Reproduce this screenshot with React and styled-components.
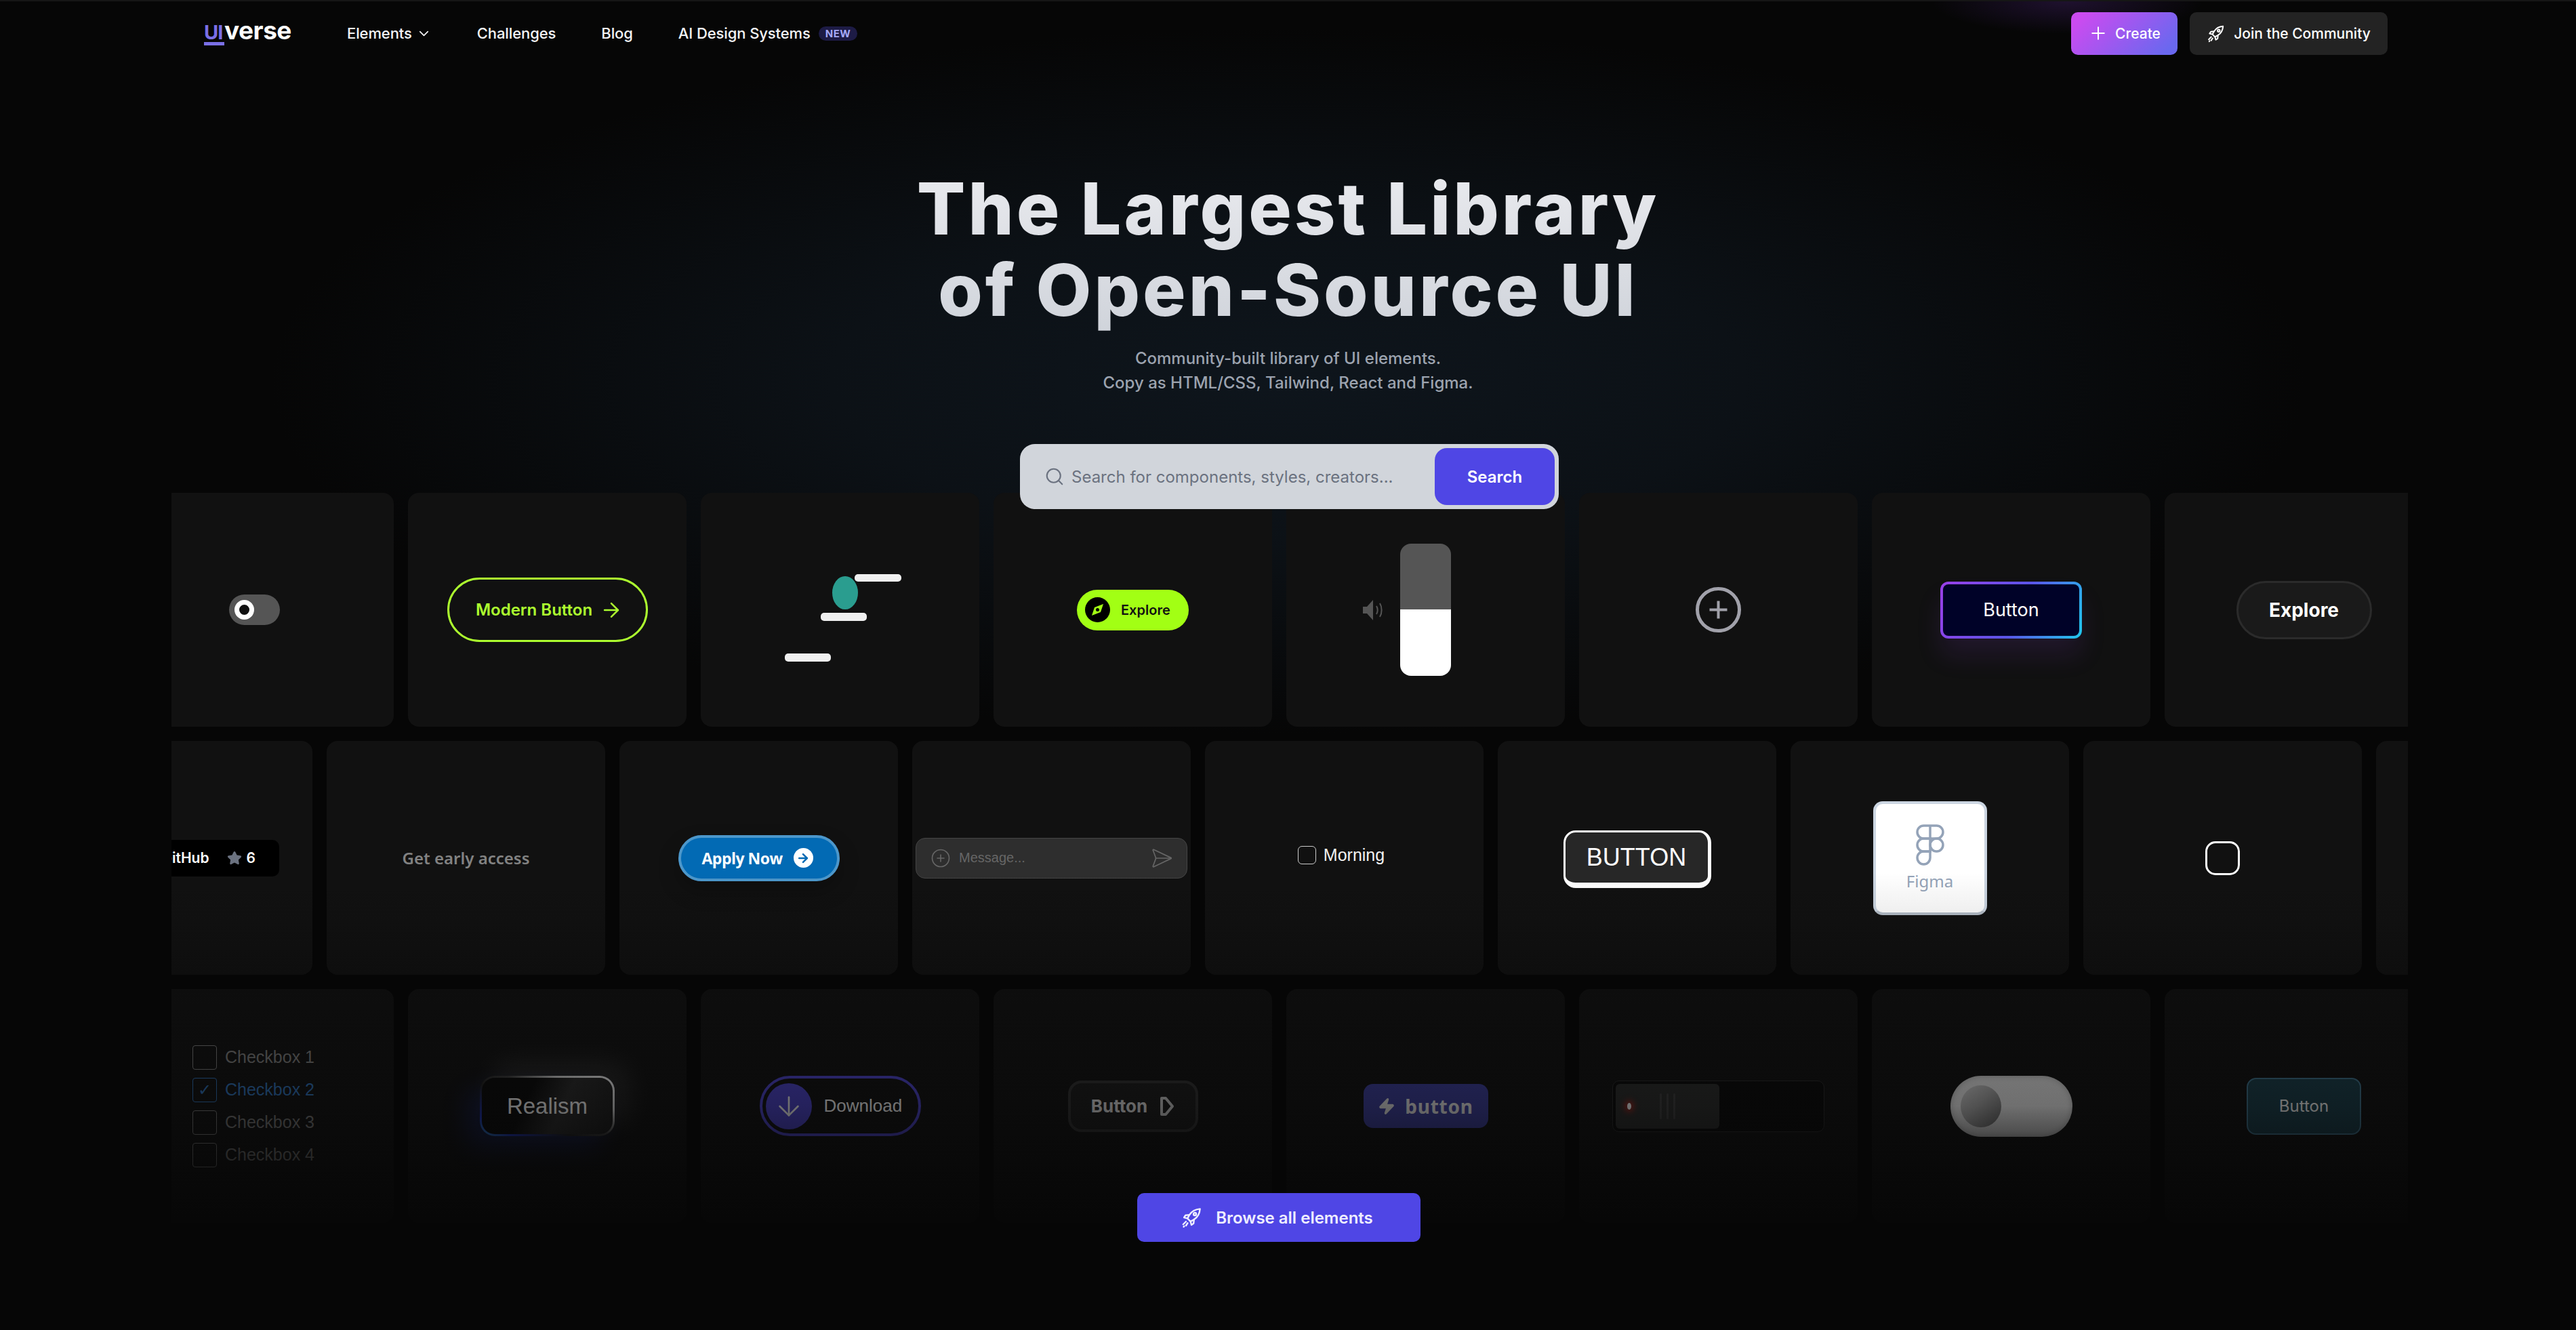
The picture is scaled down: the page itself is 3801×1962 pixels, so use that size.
import styled, { createGlobalStyle } from 'styled-components';
import { ChevronDown, Plus, Search as SearchIcon, ArrowRight, ArrowDown, Star, CirclePlus, SendHorizontal, Zap } from 'lucide-react';

const GlobalStyle = createGlobalStyle`
  html, body {
    margin: 0;
    background: #060606;
    overflow: hidden;
  }
  * {
    box-sizing: border-box;
  }
`;

const Page = styled.div`
  position: relative;
  width: 3801px;
  height: 1962px;
  overflow: hidden;
  font-family: Inter, 'Liberation Sans', sans-serif;
  color: #fff;
  border-top: 2px solid #161616;
  background:
    radial-gradient(200px 48px at 3050px 0, rgba(130, 60, 210, 0.2), transparent),
    radial-gradient(1500px 520px at 1900px 560px, #0e151c 0%, #0c1116 45%, rgba(6, 6, 6, 0) 100%),
    #060606;
`;

/* nav */
const Nav = styled.nav`
  display: flex;
  align-items: center;
  height: 94px;
  padding: 0 278px 0 301px;
`;

const Logo = styled.div`
  display: flex;
  align-items: baseline;
  width: 211px;
  font-size: 37px;
  font-weight: 700;
  letter-spacing: -0.5px;
  line-height: 1;
  padding-bottom: 6px;
`;

const LogoMark = styled.span`
  display: inline-block;
  width: 30px;
  font-size: 29px;
  font-weight: 700;
  color: #7a6fe6;
  border-bottom: 5px solid #7a6fe6;
  letter-spacing: -1px;
`;

const NavLinks = styled.div`
  display: flex;
  align-items: center;
  gap: 67px;
  flex: 1;
`;

const NavLink = styled.a`
  display: flex;
  align-items: center;
  gap: ${p => p.$gap || 12}px;
  font-size: 22px;
  font-weight: 500;
  letter-spacing: -0.1px;
  color: #f3f4f6;
  white-space: nowrap;
`;

const NewBadge = styled.span`
  padding: 0 10px;
  height: 21px;
  display: flex;
  align-items: center;
  border-radius: 11px;
  background: #1d1b45;
  color: #a5a8f5;
  font-size: 15px;
  font-weight: 700;
  letter-spacing: 0.4px;
`;

const NavActions = styled.div`
  display: flex;
  gap: 18px;
`;

const NavButton = styled.a`
  display: flex;
  align-items: center;
  justify-content: center;
  gap: ${p => (p.$primary ? 10 : 13)}px;
  width: ${p => (p.$primary ? 157 : 292)}px;
  height: 63px;
  border-radius: 10px;
  font-size: 21px;
  font-weight: 500;
  color: #fff;
  background: ${p => (p.$primary ? 'linear-gradient(135deg, #cb4bf0 10%, #6a68ef 90%)' : '#232323')};
`;

/* hero */
const Hero = styled.header`
  display: flex;
  flex-direction: column;
  align-items: center;
  padding-top: 152px;
`;

const Title = styled.h1`
  margin: 0;
  font-size: 106px;
  line-height: 120px;
  font-weight: 800;
  text-align: center;
  letter-spacing: 4px;
  color: transparent;
  background: linear-gradient(#e9eaee, #d0d4db);
  -webkit-background-clip: text;
  background-clip: text;
`;

const Subtitle = styled.p`
  margin: 23px 0 0;
  font-size: 24px;
  line-height: 36px;
  font-weight: 500;
  text-align: center;
  color: #9ca3af;
`;

const SearchBox = styled.div`
  position: relative;
  z-index: 3;
  display: flex;
  align-items: center;
  width: 795px;
  height: 96px;
  margin: 72px 0 0 4px;
  padding: 6px;
  border-radius: 22px;
  background: #d1d5db;
`;

const SearchField = styled.div`
  flex: 1;
  display: flex;
  align-items: center;
  gap: 10px;
  height: 100%;
  padding-left: 30px;
  color: #6b7280;
  font-size: 24px;
`;

const SearchButton = styled.button`
  width: 177px;
  height: 84px;
  border: 0;
  border-radius: 18px;
  background: #4f46e5;
  color: #fff;
  font-family: inherit;
  font-size: 24px;
  font-weight: 600;
`;

/* marquee rows */
const Rows = styled.section`
  position: relative;
  display: flex;
  flex-direction: column;
  gap: 21px;
  width: 3300px;
  margin: -24px 0 0 253px;
  overflow: hidden;
`;

const Row = styled.div`
  display: flex;
  gap: 21px;
  margin-left: ${p => p.$offset}px;
`;

const Card = styled.div`
  position: relative;
  flex: 0 0 411px;
  height: 345px;
  display: flex;
  align-items: center;
  justify-content: center;
  border-radius: 16px;
  background: #111;
`;

const Fade = styled.div`
  position: absolute;
  inset: 0;
  z-index: 2;
  pointer-events: none;
  background: linear-gradient(
    to bottom,
    rgba(6, 6, 6, 0) 52%,
    rgba(6, 6, 6, 0.07) 58%,
    rgba(6, 6, 6, 0.27) 66%,
    rgba(6, 6, 6, 0.33) 68%,
    rgba(6, 6, 6, 0.55) 84%,
    rgba(6, 6, 6, 0.92) 100%
  );
`;

/* row 1 */
const RingToggle = styled.div`
  display: flex;
  align-items: center;
  width: 75px;
  height: 45px;
  padding-left: 8px;
  border-radius: 23px;
  background: #555;
`;

const RingKnob = styled.span`
  width: 29px;
  height: 29px;
  border-radius: 50%;
  border: 7px solid #fff;
  background: #111;
`;

const ModernButton = styled.button`
  display: flex;
  align-items: center;
  gap: 11px;
  width: 296px;
  height: 95px;
  justify-content: center;
  padding: 0 0 0 6px;
  border: 3px solid #adff2f;
  border-radius: 48px;
  background: transparent;
  color: #adff2f;
  font-family: inherit;
  font-size: 24px;
  font-weight: 600;
`;

const ExplorePill = styled.button`
  display: flex;
  align-items: center;
  gap: 16px;
  width: 165px;
  height: 60px;
  padding: 0 0 0 12px;
  border: 0;
  border-radius: 30px;
  background: #a2ff14;
  color: #111;
  font-family: inherit;
  font-size: 20px;
  font-weight: 600;
`;

const SliderGroup = styled.div`
  display: flex;
  align-items: center;
  gap: 24px;
  margin-right: 56px;
`;

const VolumeSlider = styled.div`
  width: 75px;
  height: 195px;
  border-radius: 16px;
  background: linear-gradient(#555 50%, #fff 50%);
`;

const GlowButton = styled.button`
  width: 209px;
  height: 84px;
  border: 4px solid transparent;
  border-radius: 12px;
  background:
    linear-gradient(#000228, #000228) padding-box,
    linear-gradient(115deg, #9a3fe8 0%, #5a55e8 55%, #1fc8ec 100%) border-box;
  box-shadow: 0 26px 36px rgba(130, 60, 210, 0.13);
  color: #fff;
  font-family: inherit;
  font-size: 27px;
  font-weight: 400;
`;

const DarkPill = styled.button`
  width: 200px;
  height: 86px;
  border: 3px solid #2b2b2b;
  border-radius: 43px;
  background: #1a1a1a;
  color: #fff;
  font-family: inherit;
  font-size: 28px;
  font-weight: 700;
`;

/* row 2 */
const GithubPill = styled.div`
  display: flex;
  align-items: center;
  justify-content: flex-end;
  gap: 26px;
  width: 313px;
  height: 54px;
  padding-right: 35px;
  border-radius: 10px;
  background: #000;
  font-size: 21px;
  font-weight: 600;
`;

const StarCount = styled.span`
  display: flex;
  align-items: center;
  gap: 7px;
`;

const EarlyAccess = styled.span`
  font-family: 'Noto Sans', sans-serif;
  font-size: 24px;
  font-weight: 600;
  color: #828282;
`;

const ApplyButton = styled.button`
  display: flex;
  align-items: center;
  gap: 16px;
  width: 238px;
  height: 68px;
  padding-left: 31px;
  border: 4px solid #4c97cb;
  border-radius: 34px;
  background: #026ab4;
  box-shadow: 0 14px 30px rgba(0, 0, 0, 0.25);
  color: #fff;
  font-family: 'Open Sans', sans-serif;
  font-size: 23px;
  font-weight: 700;
  letter-spacing: -0.5px;
`;

const ApplyIcon = styled.span`
  display: flex;
  align-items: center;
  justify-content: center;
  width: 29px;
  height: 29px;
  border-radius: 50%;
  background: #fff;
  color: #026ab4;
`;

const MessageBox = styled.div`
  display: flex;
  align-items: center;
  gap: 12px;
  width: 401px;
  height: 60px;
  padding: 0 20px 0 21px;
  border: 1px solid #444;
  border-radius: 14px;
  background: #2e2e2e;
  color: #666;
  font-family: 'Liberation Sans', sans-serif;
  font-size: 20px;
`;

const MessageText = styled.span`
  flex: 1;
`;

const CheckRow = styled.label`
  display: flex;
  align-items: center;
  gap: 11px;
  margin: 0 9px 9px 0;
  font-size: 25px;
  color: #f1f1f1;
  font-family: 'Liberation Sans', sans-serif;
`;

const CheckBox = styled.span`
  display: flex;
  align-items: center;
  justify-content: center;
  width: ${p => p.$size}px;
  height: ${p => p.$size}px;
  border: 1.5px solid ${p => p.$color};
  border-radius: ${p => (p.$size > 30 ? 4 : 6)}px;
  color: ${p => p.$color};
  font-size: 24px;
`;

const ChunkyButton = styled.button`
  width: 218px;
  height: 85px;
  border: 3px solid #fff;
  border-right-width: 5px;
  border-bottom-width: 8px;
  border-radius: 18px;
  background: #272727;
  color: #fff;
  font-family: 'Liberation Sans', sans-serif;
  font-size: 36px;
  margin-top: 3px;
`;

const FigmaKey = styled.div`
  display: flex;
  flex-direction: column;
  align-items: center;
  gap: 6px;
  width: 168px;
  height: 168px;
  padding-top: 30px;
  border: 4px solid #cbd5e1;
  border-bottom-color: #b4bdc8;
  border-radius: 14px;
  background: #fff;
  color: #94a3b8;
  font-family: 'Noto Sans', sans-serif;
  font-size: 24px;
`;

const RoundSquare = styled.div`
  width: 51px;
  height: 50px;
  border: 3px solid #fff;
  border-radius: 15px;
`;

/* row 3 */
const CheckList = styled.div`
  display: flex;
  flex-direction: column;
  gap: 12px;
  width: 183px;
`;

const CheckItem = styled.label`
  display: flex;
  align-items: center;
  gap: 12px;
  font-family: 'Liberation Sans', sans-serif;
  font-size: 25px;
  color: ${p => p.$color};
`;

const RealismButton = styled.button`
  width: 199px;
  height: 89px;
  border: 3px solid transparent;
  border-radius: 22px;
  background:
    linear-gradient(115deg, #0a0a0a 35%, #2b2b2b 60%, #1a1a1a 100%) padding-box,
    linear-gradient(30deg, #2d7fb0 0%, #1b2ea8 14%, #1e1e1e 38%, #3a3a3a 55%, #ccc 75%, #eee 100%) border-box;
  box-shadow: 20px -18px 40px rgba(255, 255, 255, 0.1), -20px 20px 35px rgba(30, 60, 220, 0.22);
  color: #f0f0f0;
  font-family: 'Liberation Sans', sans-serif;
  font-size: 33px;
`;

const DownloadButton = styled.button`
  display: flex;
  align-items: center;
  gap: 18px;
  width: 238px;
  height: 89px;
  padding-left: 5px;
  border: 4px solid #4a42c4;
  border-radius: 45px;
  background: transparent;
  color: #f4f4f4;
  font-family: 'Liberation Sans', sans-serif;
  font-size: 26px;
`;

const DownloadIcon = styled.span`
  display: flex;
  align-items: center;
  justify-content: center;
  width: 68px;
  height: 68px;
  border-radius: 50%;
  background: #4a42c4;
`;

const OutlineButton = styled.button`
  display: flex;
  align-items: center;
  justify-content: center;
  gap: 18px;
  width: 192px;
  height: 76px;
  border: 4px solid #303030;
  border-radius: 20px;
  background: #1b1b1b;
  color: #d8d8d8;
  font-family: inherit;
  font-size: 26px;
  font-weight: 700;
`;

const BoltButton = styled.button`
  display: flex;
  align-items: center;
  justify-content: center;
  gap: 14px;
  width: 184px;
  height: 65px;
  border: 0;
  border-radius: 14px;
  background: #3b3d98;
  color: #e2e2e2;
  font-family: 'Noto Sans', sans-serif;
  font-size: 28px;
  font-weight: 700;
  letter-spacing: 0.8px;
`;

const SwitchTrack = styled.div`
  display: flex;
  align-items: center;
  width: 313px;
  height: 76px;
  padding: 0 4px;
  border-radius: 10px;
  border: 1px solid #2a2a2a;
  background: #0a0a0a;
`;

const SwitchHandle = styled.div`
  display: flex;
  align-items: center;
  gap: 42px;
  width: 153px;
  height: 66px;
  padding-left: 17px;
  border-radius: 6px;
  background: #2b2c2b;
`;

const RedDot = styled.span`
  width: 6px;
  height: 10px;
  border-radius: 50%;
  background: #eee;
  box-shadow: 0 0 8px 4px rgba(220, 30, 20, 0.6);
`;

const Grips = styled.span`
  display: flex;
  gap: 7px;
`;

const Grip = styled.span`
  width: 3px;
  height: 38px;
  border-radius: 2px;
  background: #3d3d3d;
`;

const SoftToggle = styled.div`
  display: flex;
  align-items: center;
  width: 180px;
  height: 90px;
  padding-left: 15px;
  border-radius: 45px;
  background: linear-gradient(#e0e0e0, #f0f0f0 50%, #c8c8c8);
  box-shadow: inset 0 0 10px rgba(0, 0, 0, 0.25);
`;

const SoftKnob = styled.span`
  width: 60px;
  height: 62px;
  border-radius: 50%;
  background: linear-gradient(135deg, #d0d0d0 5%, #aaa 45%, #777 85%);
`;

const TealButton = styled.button`
  width: 169px;
  height: 84px;
  border: 2px solid #3d6f88;
  border-radius: 14px;
  background: #1a3d49;
  color: #f0f0f0;
  font-family: inherit;
  font-size: 24px;
`;

/* footer cta */
const BrowseWrap = styled.div`
  position: relative;
  z-index: 3;
  display: flex;
  justify-content: center;
  margin-top: -44px;
  padding-right: 27px;
`;

const BrowseButton = styled.button`
  display: flex;
  align-items: center;
  justify-content: center;
  gap: 20px;
  width: 418px;
  height: 72px;
  padding: 0 6px 0 0;
  border: 0;
  border-radius: 10px;
  background: #4f46e5;
  color: #eef;
  font-family: inherit;
  font-size: 24px;
  font-weight: 600;
`;

const RocketIcon = ({ size }) => (
  <svg width={size} height={size} viewBox="0 0 24 24" fill="none" stroke="currentColor" strokeWidth="1.8" strokeLinecap="round" strokeLinejoin="round">
    <path d="M21.5 2.5c-5 .4-9.2 2.6-11.7 6.6L7.6 13l3.4 3.4 3.9-2.2c4-2.5 6.2-6.700 6.600-11.700z" />
    <path d="M9.800 9.100 5.500 9.600 3.800 12l3.800 1M14.900 14.200l-.5 4.300-2.400 1.700-1-3.800" />
    <circle cx="15.800" cy="8.200" r="1.500" />
    <path d="M6 16.500 2.800 19.700M7.800 18.200 6 21M4 21.500l-.6.800" />
  </svg>
);

const CompassIcon = () => (
  <svg width="37" height="37" viewBox="0 0 37 37">
    <circle cx="18.500" cy="18.500" r="18.500" fill="#000" />
    <path d="M27 10 23 22 10 27l4-12z" fill="#a2ff14" />
    <circle cx="18.500" cy="18.500" r="2.500" fill="#000" />
  </svg>
);

const SpeakerIcon = () => (
  <svg width="32" height="32" viewBox="0 0 32 32" fill="none" stroke="#555" strokeWidth="2">
    <path d="M1 11h6l9-10v30l-9-10H1z" fill="#555" stroke="none" />
    <path d="M21 10c2 3.500 2 8.500 0 12M26 6c3.500 5.500 3.500 14.500 0 20" />
  </svg>
);

const PlusCircle = () => (
  <svg width="67" height="67" viewBox="0 0 67 67" fill="none" stroke="#a1a1aa">
    <circle cx="33.500" cy="33.500" r="31" strokeWidth="5" />
    <path d="M33.500 20.500v26M20.500 33.500h26" strokeWidth="4" />
  </svg>
);

const BouncingLoader = () => (
  <svg width="411" height="345" viewBox="0 0 411 345">
    <rect x="227" y="120" width="69" height="11" rx="5" fill="#f0f0f0" />
    <rect x="177" y="177" width="68" height="12" rx="5" fill="#f0f0f0" />
    <rect x="124" y="237" width="68" height="12" rx="5" fill="#f0f0f0" />
    <ellipse cx="213" cy="147.500" rx="19" ry="24.500" fill="#2a9d8f" />
  </svg>
);

const FigmaIcon = () => (
  <svg width="42" height="61" viewBox="0 0 42 61" fill="none" stroke="#94a3b8" strokeWidth="3.500">
    <path d="M21 2H11.500a9.500 9.500 0 0 0 0 19H21zM21 2h9.500a9.500 9.500 0 0 1 0 19H21z" />
    <path d="M21 21H11.500a9.500 9.500 0 0 0 0 19H21z" />
    <circle cx="30.500" cy="30.500" r="9.500" />
    <path d="M21 40H11.500A9.500 9.500 0 1 0 21 49.500z" />
  </svg>
);

const PlayOutline = () => (
  <svg width="22" height="30" viewBox="0 0 22 30" fill="none" stroke="#c4c4c4" strokeWidth="4" strokeLinejoin="round">
    <path d="M3 3h6l10 12-10 12H3z" />
  </svg>
);

const App = () => {
  return (
    <Page>
      <GlobalStyle />
      <Nav>
        <Logo>
          <LogoMark>UI</LogoMark>verse
        </Logo>
        <NavLinks>
          <NavLink $gap={6}>
            Elements <ChevronDown size={23} strokeWidth={1.8} />
          </NavLink>
          <NavLink>Challenges</NavLink>
          <NavLink>Blog</NavLink>
          <NavLink>
            AI Design Systems <NewBadge>NEW</NewBadge>
          </NavLink>
        </NavLinks>
        <NavActions>
          <NavButton $primary>
            <Plus size={30} strokeWidth={1.6} /> Create
          </NavButton>
          <NavButton>
            <RocketIcon size={27} /> Join the Community
          </NavButton>
        </NavActions>
      </Nav>

      <Hero>
        <Title>
          The Largest Library
          <br />
          of Open-Source UI
        </Title>
        <Subtitle>
          Community-built library of UI elements.
          <br />
          Copy as HTML/CSS, Tailwind, React and Figma.
        </Subtitle>
        <SearchBox>
          <SearchField>
            <SearchIcon size={30} strokeWidth={1.7} />
            Search for components, styles, creators...
          </SearchField>
          <SearchButton>Search</SearchButton>
        </SearchBox>
      </Hero>

      <Rows>
        <Row $offset={-83}>
          <Card>
            <RingToggle>
              <RingKnob />
            </RingToggle>
          </Card>
          <Card>
            <ModernButton>
              Modern Button <ArrowRight size={34} strokeWidth={1.8} />
            </ModernButton>
          </Card>
          <Card>
            <BouncingLoader />
          </Card>
          <Card>
            <ExplorePill>
              <CompassIcon /> Explore
            </ExplorePill>
          </Card>
          <Card>
            <SliderGroup>
              <SpeakerIcon />
              <VolumeSlider />
            </SliderGroup>
          </Card>
          <Card>
            <PlusCircle />
          </Card>
          <Card>
            <GlowButton>Button</GlowButton>
          </Card>
          <Card>
            <DarkPill>Explore</DarkPill>
          </Card>
        </Row>

        <Row $offset={-203}>
          <Card>
            <GithubPill>
              GitHub
              <StarCount>
                <Star size={22} fill="#6b7280" color="#6b7280" /> 6
              </StarCount>
            </GithubPill>
          </Card>
          <Card>
            <EarlyAccess>Get early access</EarlyAccess>
          </Card>
          <Card>
            <ApplyButton>
              Apply Now
              <ApplyIcon>
                <ArrowRight size={20} strokeWidth={3} />
              </ApplyIcon>
            </ApplyButton>
          </Card>
          <Card>
            <MessageBox>
              <CirclePlus size={30} strokeWidth={1.3} />
              <MessageText>Message...</MessageText>
              <SendHorizontal size={34} strokeWidth={1.2} />
            </MessageBox>
          </Card>
          <Card>
            <CheckRow>
              <CheckBox $size={27} $color="#ccc" />
              Morning
            </CheckRow>
          </Card>
          <Card>
            <ChunkyButton>BUTTON</ChunkyButton>
          </Card>
          <Card>
            <FigmaKey>
              <FigmaIcon />
              Figma
            </FigmaKey>
          </Card>
          <Card>
            <RoundSquare />
          </Card>
          <Card />
        </Row>

        <Row $offset={-83}>
          <Card>
            <CheckList>
              <CheckItem $color="#777">
                <CheckBox $size={36} $color="#777" />
                Checkbox 1
              </CheckItem>
              <CheckItem $color="#2f6fb5">
                <CheckBox $size={36} $color="#2f6fb5">✓</CheckBox>
                Checkbox 2
              </CheckItem>
              <CheckItem $color="#777">
                <CheckBox $size={36} $color="#777" />
                Checkbox 3
              </CheckItem>
              <CheckItem $color="#777">
                <CheckBox $size={36} $color="#777" />
                Checkbox 4
              </CheckItem>
            </CheckList>
          </Card>
          <Card>
            <RealismButton>Realism</RealismButton>
          </Card>
          <Card>
            <DownloadButton>
              <DownloadIcon>
                <ArrowDown size={46} strokeWidth={1.4} color="#eee" />
              </DownloadIcon>
              Download
            </DownloadButton>
          </Card>
          <Card>
            <OutlineButton>
              Button <PlayOutline />
            </OutlineButton>
          </Card>
          <Card>
            <BoltButton>
              <Zap size={26} fill="#ddd" color="#ddd" /> button
            </BoltButton>
          </Card>
          <Card>
            <SwitchTrack>
              <SwitchHandle>
                <RedDot />
                <Grips>
                  <Grip />
                  <Grip />
                  <Grip />
                </Grips>
              </SwitchHandle>
            </SwitchTrack>
          </Card>
          <Card>
            <SoftToggle>
              <SoftKnob />
            </SoftToggle>
          </Card>
          <Card>
            <TealButton>Button</TealButton>
          </Card>
        </Row>
        <Fade />
      </Rows>

      <BrowseWrap>
        <BrowseButton>
          <RocketIcon size={32} /> Browse all elements
        </BrowseButton>
      </BrowseWrap>
    </Page>
  );
};

export default App;
